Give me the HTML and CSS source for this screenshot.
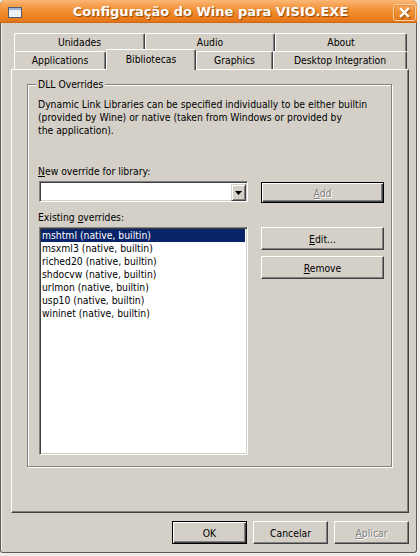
FILE: index.html
```html
<!DOCTYPE html>
<html>
<head>
<meta charset="utf-8">
<title>Configuração do Wine para VISIO.EXE</title>
<link rel="stylesheet" href="styles.css">
</head>
<body>
<div class="window">
  <div class="titlebar">
    <div class="ticon-cell">
      <svg class="ticon" width="14" height="11" viewBox="0 0 14 11">
        <rect x="0.5" y="0.5" width="13" height="10" fill="#eef2f7" stroke="#4c5b70"/>
        <rect x="1" y="1" width="12" height="2" fill="#9fb6d4"/>
      </svg>
    </div>
    <div class="title">Configuração do Wine para VISIO.EXE</div>
    <div class="close-cell">
      <div class="closebtn">
        <svg width="21" height="15" viewBox="0 0 21 15">
          <path d="M7.5 4.5 L14.5 11.5 M14.5 4.5 L7.5 11.5" stroke="#8a3c00" stroke-opacity="0.55" stroke-width="2.6" stroke-linecap="square" transform="translate(0.8,0.8)"/>
          <path d="M7 4 L14 11 M14 4 L7 11" stroke="#ffffff" stroke-width="2.4" stroke-linecap="square"/>
        </svg>
      </div>
    </div>
  </div>
  <div class="client">
    <div class="tabs">
      <div class="tabrow">
        <div class="tab t-unid">Unidades</div>
        <div class="tab t-audio">Audio</div>
        <div class="tab t-about">About</div>
      </div>
      <div class="tabrow">
        <div class="tab t-apps">Applications</div>
        <div class="tab t-bib selected">Bibliotecas</div>
        <div class="tab t-gfx">Graphics</div>
        <div class="tab t-desk">Desktop Integration</div>
      </div>
    </div>
    <div class="panel">
      <div class="group">
        <div class="legend">DLL Overrides</div>
        <p class="desc">Dynamic Link Libraries can be specified individually to be either builtin<br>(provided by Wine) or native (taken from Windows or provided by<br>the application).</p>
        <div class="dllgrid">
          <div class="lbl lbl-new"><u>N</u>ew override for library:</div>
          <div class="combo">
            <div class="dropbtn">
              <svg width="7" height="4" viewBox="0 0 7 4"><path d="M0 0 H7 L3.5 4 Z" fill="#000"/></svg>
            </div>
          </div>
          <div class="btn default disabled btn-add"><span><u>A</u>dd</span></div>
          <div class="lbl lbl-exist">Existing <u>o</u>verrides:</div>
          <div class="listbox">
            <div class="item sel">mshtml (native, builtin)</div>
            <div class="item">msxml3 (native, builtin)</div>
            <div class="item">riched20 (native, builtin)</div>
            <div class="item">shdocvw (native, builtin)</div>
            <div class="item">urlmon (native, builtin)</div>
            <div class="item">usp10 (native, builtin)</div>
            <div class="item">wininet (native, builtin)</div>
          </div>
          <div class="sidebtns">
            <div class="btn side"><span><u>E</u>dit...</span></div>
            <div class="btn side"><span><u>R</u>emove</span></div>
          </div>
        </div>
      </div>
    </div>
    <div class="footer">
      <div class="btn default foot"><span>OK</span></div>
      <div class="btn foot"><span>Cancelar</span></div>
      <div class="btn foot disabled"><span><u>A</u>plicar</span></div>
    </div>
  </div>
</div>
</body>
</html>
```

FILE: styles.css
```css
html, body {
  margin: 0;
  padding: 0;
}
body {
  width: 420px;
  height: 556px;
  overflow: hidden;
  background: #eeedeb;
  font-family: "DejaVu Sans Condensed", "DejaVu Sans", sans-serif;
  font-stretch: condensed;
  font-size: 10.3px;
  color: #000;
}
u {
  text-decoration: underline;
  text-underline-offset: 1px;
}

.window {
  width: 417px;
  height: 553px;
  box-sizing: border-box;
  background: #d4d0c8;
  border: 1px solid #5f5a53;
  border-top: none;
  border-radius: 5px 5px 3px 3px;
  box-shadow: inset 1px 0 0 #f2f1ee;
  display: flex;
  flex-direction: column;
}

.titlebar {
  height: 23px;
  flex: none;
  margin: 0 -1px;
  border-radius: 5px 5px 0 0;
  background: linear-gradient(to bottom, #fbb877 0px, #f6a152 5px, #f1902f 11px, #ec8222 17px, #e3731a 22px, #b9600f 23px);
  display: grid;
  grid-template-columns: 30px 1fr 30px;
  align-items: center;
}
.ticon-cell {
  height: 23px;
  padding: 7px 0 0 8px;
  box-sizing: border-box;
}
.ticon {
  display: block;
}
.title {
  text-align: center;
  padding-left: 4px;
  font-family: "DejaVu Sans", sans-serif;
  font-stretch: normal;
  font-weight: bold;
  font-size: 13px;
  line-height: 23px;
  color: #fff;
  white-space: nowrap;
  text-shadow: 1px 1px 1px rgba(110, 50, 0, 0.75);
}
.close-cell {
  height: 23px;
  position: relative;
}
.closebtn {
  position: absolute;
  left: 6px;
  top: 4px;
  width: 23px;
  height: 17px;
  box-sizing: border-box;
  border: 1px solid #fdd2a6;
  border-radius: 3px;
  background: linear-gradient(to bottom, #f7a65a, #ee8a2c 60%, #e57a20);
  box-shadow: inset 0 0 0 1px rgba(200, 100, 20, 0.35);
}
.closebtn svg {
  display: block;
}

.client {
  flex: 1;
  padding: 10px 7px 8px 10px;
  display: flex;
  flex-direction: column;
}

.tabs {
  height: 36px;
  padding-left: 3px;
  flex: none;
}
.tabrow {
  display: flex;
  height: 18px;
  align-items: flex-start;
}
.tab {
  height: 18px;
  box-sizing: border-box;
  border-top: 1px solid #fff;
  border-left: 1px solid #fff;
  border-right: 1px solid #404040;
  border-radius: 2px 2px 0 0;
  box-shadow: inset -1px 0 0 #808080;
  text-align: center;
  line-height: 17px;
  white-space: nowrap;
  background: #d4d0c8;
}
.t-unid { width: 131px; }
.t-audio { width: 130px; }
.t-about { width: 132px; }
.t-apps { width: 92px; }
.t-bib { width: 90px; }
.t-gfx { width: 77px; }
.t-desk { width: 134px; }
.tab.selected {
  position: relative;
  z-index: 2;
  height: 21px;
  margin-top: -2px;
  line-height: 19px;
}

.panel {
  height: 444px;
  flex: none;
  box-sizing: border-box;
  border-top: 1px solid #fff;
  border-left: 1px solid #fff;
  border-right: 1px solid #404040;
  border-bottom: 1px solid #404040;
  box-shadow: inset -1px -1px 0 #808080;
  padding: 14px 16px 0 15px;
}

.group {
  position: relative;
  width: 365px;
  height: 383px;
  box-sizing: border-box;
  border: 1px solid #808080;
  box-shadow: inset 1px 1px 0 #fff, 1px 1px 0 #fff;
  padding: 13px 7px 0 11px;
}
.legend {
  position: absolute;
  top: -7px;
  left: 8px;
  padding: 0 2px;
  line-height: 13px;
  background: #d4d0c8;
}
.desc {
  margin: 0 0 0 -1px;
  line-height: 13px;
  white-space: nowrap;
}

.dllgrid {
  margin-top: 28px;
  display: grid;
  grid-template-columns: 209px 123px;
  column-gap: 13px;
  align-items: start;
}
.lbl {
  grid-column: 1;
  line-height: 13px;
  margin-left: -1px;
  white-space: nowrap;
}
.lbl-new { grid-row: 1; }
.lbl-exist { grid-row: 3; margin-top: 8px; }

.combo {
  grid-column: 1;
  grid-row: 2;
  margin-top: 3px;
  height: 21px;
  box-sizing: border-box;
  border: 1px solid;
  border-color: #808080 #fff #fff #808080;
  box-shadow: inset 1px 1px 0 #404040, inset -1px -1px 0 #d4d0c8;
  background: #fff;
  padding: 2px 1px 1px 2px;
  display: flex;
  justify-content: flex-end;
}
.dropbtn {
  width: 15px;
  height: 17px;
  box-sizing: border-box;
  background: #d4d0c8;
  border: 1px solid;
  border-color: #d4d0c8 #404040 #404040 #d4d0c8;
  box-shadow: inset 1px 1px 0 #fff, inset -1px -1px 0 #808080;
  display: flex;
  align-items: center;
  justify-content: center;
}
.dropbtn svg {
  display: block;
}

.btn {
  box-sizing: border-box;
  background: #d4d0c8;
  border: 1px solid;
  border-color: #fff #404040 #404040 #fff;
  box-shadow: inset -1px -1px 0 #808080;
  display: flex;
  align-items: center;
  justify-content: center;
  white-space: nowrap;
}
.btn.default {
  border-color: #000;
  box-shadow: inset 1px 1px 0 #fff, inset -1px -1px 0 #404040, inset -2px -2px 0 #808080;
}
.btn.disabled {
  color: #808080;
  text-shadow: 1px 1px 0 #fff;
}
.btn-add {
  grid-column: 2;
  grid-row: 2;
  margin-top: 4px;
  height: 21px;
}

.listbox {
  grid-column: 1;
  grid-row: 4;
  margin-top: 3px;
  height: 228px;
  box-sizing: border-box;
  border: 1px solid;
  border-color: #808080 #fff #fff #808080;
  box-shadow: inset 1px 1px 0 #404040, inset -1px -1px 0 #d4d0c8;
  background: #fff;
  padding: 1px 2px 1px 1px;
}
.item {
  height: 13px;
  line-height: 13px;
  padding-left: 1px;
  white-space: nowrap;
}
.item.sel {
  background: #0a246a;
  color: #fff;
}

.sidebtns {
  grid-column: 2;
  grid-row: 4;
  margin-top: 3px;
  display: flex;
  flex-direction: column;
  gap: 6px;
}
.btn.side {
  height: 23px;
}

.footer {
  margin-top: 8px;
  display: flex;
  justify-content: flex-end;
  gap: 6px;
}
.btn.foot {
  width: 75px;
  height: 23px;
}
```
